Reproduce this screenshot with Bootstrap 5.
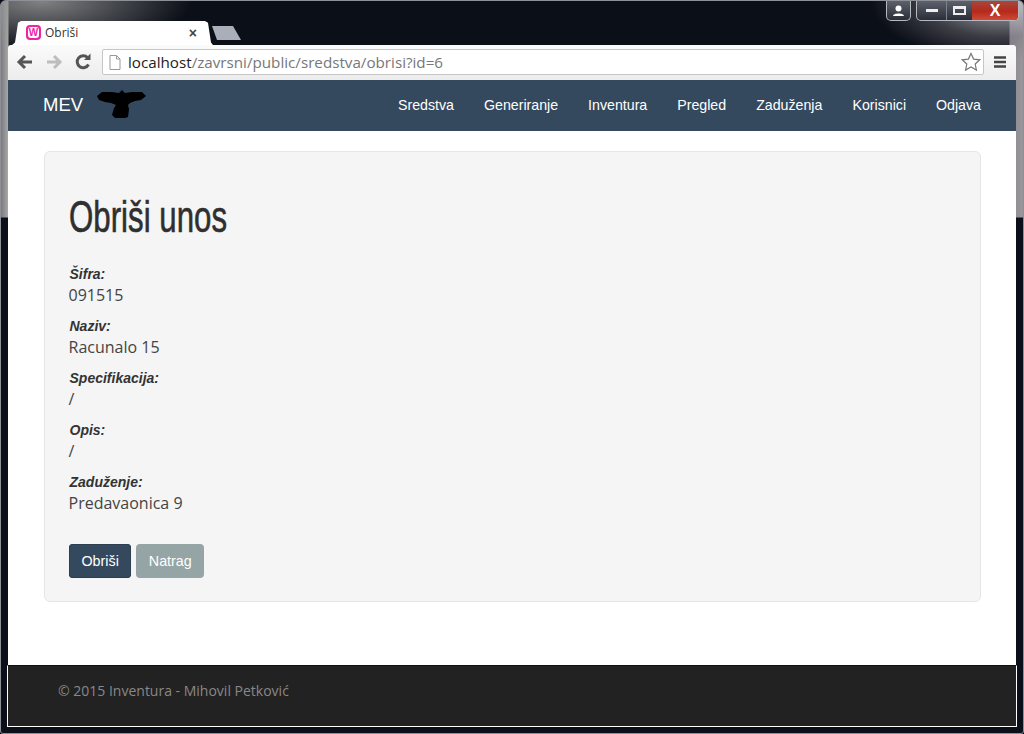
<!DOCTYPE html>
<html lang="hr">
<head>
<meta charset="utf-8">
<title>Obriši</title>
<link rel="stylesheet" href="https://cdn.jsdelivr.net/npm/bootstrap@5.3.0/dist/css/bootstrap.min.css">
<style>
html,body{height:734px;overflow:hidden;background:#0b0f17;}
body{font-family:"Open Sans",sans-serif;color:#333;}
.win-frame{height:734px;padding:0 7px 6px 7px;border:1px solid #8d9097;border-radius:6px 6px 3px 3px;
 background:
  radial-gradient(ellipse 130px 60px at 1000px 0,rgba(205,205,212,.85),rgba(120,115,125,.45) 60%,transparent 100%),
  radial-gradient(ellipse 150px 50px at 40px 0,rgba(150,150,150,.85),transparent 100%),
  linear-gradient(to bottom,transparent 0,transparent 216px,#0b0f1a 217px),
  linear-gradient(to right,#7b7b7d 0,#a8a8aa 7px,#0b0f17 8px,#0b0f17 1008px,#8d8690 1009px,#9a9a9c 1024px);}
.title-strip{height:44px;}
.win-controls{margin-right:-3px;height:20px;}
.win-btn{height:20px;border:1px solid #b4b8c0;border-top:0;border-radius:0 0 5px 5px;background:linear-gradient(#5c616c,#2a2e38);color:#fff;}
.win-user{width:25px;margin-right:5px;}
.win-set{width:103px;overflow:hidden;}
.win-min{width:29px;height:100%;}
.win-max{width:26px;height:100%;border-left:1px solid #7d828c;}
.win-close{height:100%;background:linear-gradient(#a8473c,#b52a1c 55%,#cf4a34);}
.win-close-x{font:700 16px/19px "Liberation Sans",sans-serif;}
.glyph-min{width:12px;height:3px;background:#eee;}
.glyph-max{width:13px;height:9px;border:2px solid #eee;border-top-width:3px;}
.tab-shape{width:201px;height:24px;margin-left:4px;padding:0 9px 0 14px;background:#fff;clip-path:polygon(0 100%,3px 90%,6px 8%,9px 0,193px 0,196px 8%,199px 90%,201px 100%);font-size:12px;color:#333;}
.fav-icon{width:15px;height:15px;border-radius:4px;background:#ee22a5;padding:2px;}
.fav-core{width:11px;height:11px;border-radius:3px;background:#fff;color:#ee22a5;font:700 10px/11px "Liberation Sans",sans-serif;text-align:center;}
.tab-close{font:700 14px/1 "Liberation Sans",sans-serif;color:#444;margin-right:7px;}
.tab-new{width:29px;height:14px;margin-left:-1px;margin-bottom:5px;background:#a9aeb8;clip-path:polygon(0 0,21px 0,29px 100%,5px 100%);}
.tool-strip{height:35px;background:linear-gradient(#fbfbfb,#ececec);border-radius:3px 3px 0 0;padding:0 9px 0 7px;}
.tool-ico{width:20px;height:20px;}
.tool-gap{width:9px;}
.omni{height:26px;margin-left:9px;margin-right:9px;background:#fff;border:1px solid #c6c6c6;border-radius:2px;padding:0 2px 0 6px;font-size:15.2px;color:#777;}
.omni-host{color:#222;}
.omni-url{margin-left:7px;}
.mev-nav{height:51px;background:#34495e;padding:0 20px 0 35px;}
.mev-brand{font:400 18.5px/1 "Liberation Sans",sans-serif;color:#fff;padding:0;margin:0 14px 0 0;}
.mev-logo{width:50px;height:30px;}
.mev-nav .navbar-nav .nav-link.mev-link{font:400 14.2px/1 "Liberation Sans",sans-serif;color:#fff;padding:0 15px;}
.page-main{background:#fff;height:535px;padding:20px 35px 0 36px;}
.well-box{height:451px;background:#f5f5f5;border:1px solid #e6e6e6;border-radius:6px;padding:41px 24px 0 23.5px;}
.head-del{display:inline-block;font:400 44px/48px "Liberation Sans",sans-serif;color:#2f2f2f;margin:0 0 23px .5px;transform:scaleX(.71);transform-origin:left center;-webkit-text-stroke:.6px #2f2f2f;}
.f-label{font:italic 700 14px/20px "Liberation Sans",sans-serif;color:#333;margin:0 0 0 1px;}
.f-value{font-size:16px;line-height:22px;color:#444;margin:0 0 10px 0;}
.act-row{margin-top:30px;column-gap:5px;margin-left:.5px;}
.act-btn{font:400 14.3px/1 "Liberation Sans",sans-serif;height:34px;padding:0 12.5px;border:0;border-radius:4px;color:#fff;display:flex;align-items:center;}
.act-del{background:#34495e;box-shadow:inset 0 0 0 1px #2c3e50;}
.act-back{background:#95a5a6;}
.page-foot{height:61px;background:#222;border-top:1px solid #111;border-left:1px solid #fff;border-right:1px solid #fff;margin:0 -1px;padding:0 0 12px 50px;color:#888;font-size:14px;}
.foot-line{height:1px;margin:0 -1px;background:#fff;}
</style>
</head>
<body>
<div class="win-frame d-flex flex-column">
  <div class="title-strip d-flex align-items-end">
    <div class="tab-shape d-flex align-items-center gap-1">
      <span class="fav-icon flex-shrink-0"><span class="fav-core d-block">W</span></span>
      <span>Obriši</span>
      <span class="tab-close ms-auto">×</span>
    </div>
    <div class="tab-new"></div>
    <div class="win-controls ms-auto d-flex align-self-start">
      <div class="win-btn win-user d-flex align-items-center justify-content-center">
        <svg width="13" height="12" viewBox="0 0 13 12"><circle cx="6.5" cy="3.5" r="3" fill="#fff"/><path d="M1 11 C1 7.5 12 7.5 12 11Z" fill="#fff"/></svg>
      </div>
      <div class="win-btn win-set d-flex">
        <div class="win-min d-flex align-items-center justify-content-center"><span class="glyph-min"></span></div>
        <div class="win-max d-flex align-items-center justify-content-center"><span class="glyph-max"></span></div>
        <div class="win-close flex-grow-1 d-flex justify-content-center win-close-x">X</div>
      </div>
    </div>
  </div>
  <div class="tool-strip d-flex align-items-center">
    <svg class="tool-ico" viewBox="0 0 20 20"><path d="M17 10H5M10 4L4 10l6 6" fill="none" stroke="#555" stroke-width="3"/></svg>
    <span class="tool-gap"></span>
    <svg class="tool-ico" viewBox="0 0 20 20"><path d="M3 10h12M10 4l6 6-6 6" fill="none" stroke="#bdbdbd" stroke-width="3"/></svg>
    <span class="tool-gap"></span>
    <svg class="tool-ico" viewBox="0 0 20 20"><path d="M15.500 12.500A6 6 0 1 1 14.500 5.500" fill="none" stroke="#555" stroke-width="3"/><path d="M11 8h6.500V1.500z" fill="#555"/></svg>
    <div class="omni flex-grow-1 d-flex align-items-center">
      <svg width="12" height="15" viewBox="0 0 12 15"><path d="M1 .5h6.500L11 4v10.500H1zM7.500.5V4H11" fill="#fff" stroke="#999"/></svg>
      <span class="omni-url"><span class="omni-host">localhost</span>/zavrsni/public/sredstva/obrisi?id=6</span>
      <svg class="ms-auto" width="20" height="20" viewBox="0 0 20 20"><path d="M10 1.500l2.600 5.600 6.100.7-4.500 4.200 1.200 6L10 15l-5.400 3 1.200-6L1.300 7.800l6.100-.7z" fill="#fff" stroke="#777" stroke-width="1.200"/></svg>
    </div>
    <svg width="14" height="14" viewBox="0 0 14 14"><path d="M1 2.500h12M1 7h12M1 11.500h12" stroke="#444" stroke-width="2.600"/></svg>
  </div>
  <nav class="mev-nav navbar navbar-expand d-flex align-items-center">
    <a class="navbar-brand mev-brand" href="#">MEV</a>
    <svg class="mev-logo" viewBox="0 0 50 30"><path d="M0 6L5 2H15L22 3 25 0 28 3 35 2H45L49 6 44 10 38 11 33 13 31 15 32 19 31 27 28 28H18L15 25 17 18 19 15 14 13 8 12 2 10Z" fill="#000"/></svg>
    <ul class="navbar-nav ms-auto">
      <li class="nav-item"><a class="nav-link mev-link" href="#">Sredstva</a></li>
      <li class="nav-item"><a class="nav-link mev-link" href="#">Generiranje</a></li>
      <li class="nav-item"><a class="nav-link mev-link" href="#">Inventura</a></li>
      <li class="nav-item"><a class="nav-link mev-link" href="#">Pregled</a></li>
      <li class="nav-item"><a class="nav-link mev-link" href="#">Zaduženja</a></li>
      <li class="nav-item"><a class="nav-link mev-link" href="#">Korisnici</a></li>
      <li class="nav-item"><a class="nav-link mev-link" href="#">Odjava</a></li>
    </ul>
  </nav>
  <main class="page-main">
    <div class="well-box">
      <h1 class="head-del">Obriši unos</h1>
      <p class="f-label">Šifra:</p><p class="f-value">091515</p>
      <p class="f-label">Naziv:</p><p class="f-value">Racunalo 15</p>
      <p class="f-label">Specifikacija:</p><p class="f-value">/</p>
      <p class="f-label">Opis:</p><p class="f-value">/</p>
      <p class="f-label">Zaduženje:</p><p class="f-value">Predavaonica 9</p>
      <div class="act-row d-flex">
        <a class="btn act-btn act-del" href="#">Obriši</a>
        <a class="btn act-btn act-back" href="#">Natrag</a>
      </div>
    </div>
  </main>
  <footer class="page-foot d-flex align-items-center">© 2015 Inventura - Mihovil Petković</footer>
  <div class="foot-line"></div>
</div>
</body>
</html>
